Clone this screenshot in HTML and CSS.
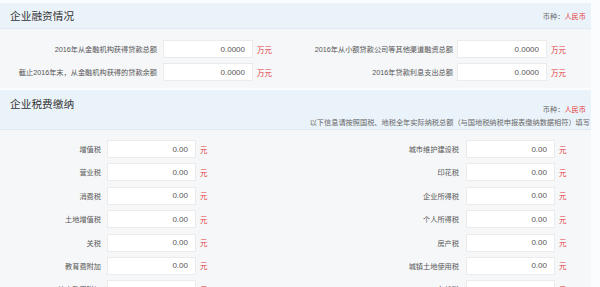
FILE: index.html
```html
<!DOCTYPE html>
<html lang="zh-CN">
<head>
    <meta charset="UTF-8">
    <title>企业融资与税费</title>
    <link rel="stylesheet" href="styles.css">
</head>
<body>
    <div class="page">
        <!-- 企业融资情况 -->
        <section class="panel">
            <div class="panel-head">
                <h2 class="panel-title">企业融资情况</h2>
                <div class="panel-info">
                    <div class="currency">币种：<span class="red">人民币</span></div>
                </div>
            </div>
            <div class="panel-body finance">
                <div class="field">
                    <label class="field-label">2016年从金融机构获得贷款总额</label>
                    <input class="field-input" type="text" value="0.0000">
                    <span class="field-unit">万元</span>
                </div>
                <div class="field">
                    <label class="field-label">2016年从小额贷款公司等其他渠道融资总额</label>
                    <input class="field-input" type="text" value="0.0000">
                    <span class="field-unit">万元</span>
                </div>
                <div class="field">
                    <label class="field-label">截止2016年末，从金融机构获得的贷款余额</label>
                    <input class="field-input" type="text" value="0.0000">
                    <span class="field-unit">万元</span>
                </div>
                <div class="field">
                    <label class="field-label">2016年贷款利息支出总额</label>
                    <input class="field-input" type="text" value="0.0000">
                    <span class="field-unit">万元</span>
                </div>
            </div>
        </section>

        <!-- 企业税费缴纳 -->
        <section class="panel">
            <div class="panel-head tall">
                <h2 class="panel-title">企业税费缴纳</h2>
                <div class="panel-info">
                    <div class="currency">币种：<span class="red">人民币</span></div>
                    <div class="note">以下信息请按照国税、地税全年实际纳税总额（与国地税纳税申报表缴纳数据相符）填写</div>
                </div>
            </div>
            <div class="panel-body tax">
                <div class="field"><label class="field-label">增值税</label><input class="field-input" type="text" value="0.00"><span class="field-unit">元</span></div>
                <div class="field"><label class="field-label">城市维护建设税</label><input class="field-input" type="text" value="0.00"><span class="field-unit">元</span></div>
                <div class="field"><label class="field-label">营业税</label><input class="field-input" type="text" value="0.00"><span class="field-unit">元</span></div>
                <div class="field"><label class="field-label">印花税</label><input class="field-input" type="text" value="0.00"><span class="field-unit">元</span></div>
                <div class="field"><label class="field-label">消费税</label><input class="field-input" type="text" value="0.00"><span class="field-unit">元</span></div>
                <div class="field"><label class="field-label">企业所得税</label><input class="field-input" type="text" value="0.00"><span class="field-unit">元</span></div>
                <div class="field"><label class="field-label">土地增值税</label><input class="field-input" type="text" value="0.00"><span class="field-unit">元</span></div>
                <div class="field"><label class="field-label">个人所得税</label><input class="field-input" type="text" value="0.00"><span class="field-unit">元</span></div>
                <div class="field"><label class="field-label">关税</label><input class="field-input" type="text" value="0.00"><span class="field-unit">元</span></div>
                <div class="field"><label class="field-label">房产税</label><input class="field-input" type="text" value="0.00"><span class="field-unit">元</span></div>
                <div class="field"><label class="field-label">教育费附加</label><input class="field-input" type="text" value="0.00"><span class="field-unit">元</span></div>
                <div class="field"><label class="field-label">城镇土地使用税</label><input class="field-input" type="text" value="0.00"><span class="field-unit">元</span></div>
                <div class="field"><label class="field-label">地方教育附加</label><input class="field-input" type="text" value="0.00"><span class="field-unit">元</span></div>
                <div class="field"><label class="field-label">车船税</label><input class="field-input" type="text" value="0.00"><span class="field-unit">元</span></div>
            </div>
        </section>
    </div>
</body>
</html>
```

FILE: styles.css
```css
body {
    margin: 0;
    padding: 0;
    background-color: #fbfcfd;
    font-family: "Liberation Sans", "Noto Sans CJK SC", sans-serif;
    color: #555;
    overflow: hidden;
}

.page {
    width: 591px;
    padding-top: 3px;
}

.panel {
    margin-bottom: 2px;
}

.panel-head {
    display: flex;
    justify-content: space-between;
    align-items: center;
    height: 26px;
    padding: 0 5px 0 10px;
    background: #ebf3fa;
    border-bottom: 1px solid #e1eaf2;
    box-sizing: border-box;
}

.panel-head.tall {
    height: 40px;
    align-items: flex-start;
}

.panel-title {
    margin: 0;
    font-size: 10.7px;
    font-weight: normal;
    color: #333;
}

.panel-head.tall .panel-title {
    margin-top: 6px;
}

.panel-info {
    text-align: right;
    font-size: 7.2px;
    color: #666;
}

.panel-head.tall .panel-info {
    margin-top: 14px;
    margin-right: -4px;
}

.panel-head.tall .currency {
    margin-right: 4px;
    margin-bottom: 3px;
}

.red {
    color: #e4393c;
}

.panel-body {
    display: grid;
    grid-template-columns: 300px 1fr;
    background: #f6f7f9;
}

.panel-body.finance {
    padding: 11px 0 7px;
    row-gap: 5px;
}

.panel-body.tax {
    padding: 10px 0 10px;
    row-gap: 5.4px;
}

.field {
    display: flex;
    align-items: center;
}

.field-label {
    flex: none;
    text-align: right;
    font-size: 7.2px;
    color: #555;
    white-space: nowrap;
}

.field-input {
    flex: none;
    height: 18px;
    box-sizing: border-box;
    margin: 0;
    padding: 0 7px 0 0;
    border: 1px solid #ebebeb;
    background: #fff;
    text-align: right;
    font-family: "Liberation Sans", sans-serif;
    font-size: 8px;
    color: #555;
    outline: none;
}

.field-unit {
    font-size: 7.5px;
    color: #e4393c;
}

/* column offsets */
.finance .field:nth-child(odd) .field-label { width: 157px; margin-right: 6px; }
.finance .field:nth-child(even) .field-label { width: 153px; margin-right: 4px; }
.finance .field-input { width: 90px; }
.finance .field-unit { margin-left: 4px; }

.tax .field:nth-child(odd) .field-label { width: 101px; margin-right: 6px; }
.tax .field:nth-child(even) .field-label { width: 159px; margin-right: 7px; }
.tax .field-input { width: 89px; }
.tax .field-unit { margin-left: 4px; }
```
